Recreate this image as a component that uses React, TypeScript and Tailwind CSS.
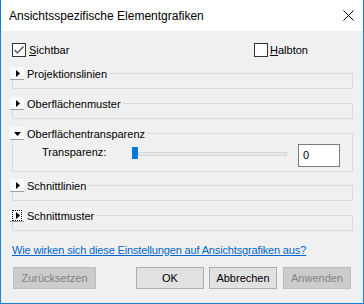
import React from "react"

const font = { fontFamily: '"Liberation Sans", Arial, sans-serif' }

function Arrow({ open }: { open?: boolean }) {
  return (
    <svg width="7" height="7" viewBox="0 0 7 7">
      {open ? <path d="M0 2 L7 2 L3.5 6 Z" fill="#000" /> : <path d="M2 0 L6 3.5 L2 7 Z" fill="#000" />}
    </svg>
  )
}

function Group({
  label,
  open,
  focused,
  children,
  className,
}: {
  label: string
  open?: boolean
  focused?: boolean
  children?: React.ReactNode
  className?: string
}) {
  return (
    <div className={className}>
      {/* header sits over the top line of the box */}
      <div className="relative z-10 flex h-[13px] items-center">
        <div className="flex h-[13px] w-[14px] items-center justify-center border-b border-[#a0a0a0] bg-[#fafafa]">
          <div className={focused ? "flex h-[11px] w-[10px] items-center justify-center border border-dotted border-black" : "flex"}>
            <Arrow open={open} />
          </div>
        </div>
        <span className="bg-[#f0f0f0] pl-[3px] pr-[2px] text-[11px] leading-[16px] text-black">{label}</span>
      </div>
      <div className="ml-[2px] mr-[10px] -mt-[7px] border border-[#dadada]">{children}</div>
    </div>
  )
}

export default function App() {
  return (
    <div style={font} className="flex h-[304px] w-[364px] flex-col border-x border-b border-[#1883d7] bg-[#f0f0f0] text-[11px] text-black">
      {/* Title bar */}
      <div className="flex h-[31px] items-center justify-between bg-white pl-[8px] pr-[8px]">
        <span className="text-[12px]">Ansichtsspezifische Elementgrafiken</span>
        <svg width="11" height="11" viewBox="0 0 11 11" className="mr-[1px]">
          <path d="M0.5 0.5 L10.5 10.5 M10.5 0.5 L0.5 10.5" stroke="#000" strokeWidth="1" />
        </svg>
      </div>

      <div className="flex flex-col pl-[9px]">
        {/* Checkboxes */}
        <div className="mt-[12px] flex h-[14px] items-center pl-[2px]">
          <div className="flex h-[14px] w-[14px] items-center justify-center border border-[#333] bg-white">
            <svg width="12" height="12" viewBox="0 0 12 12">
              <path d="M1.5 6 L4.5 9 L10.5 2.5" fill="none" stroke="#444" strokeWidth="1.2" />
            </svg>
          </div>
          <span className="ml-[3px] w-[225px] leading-[16px]">
            <span className="underline">S</span>ichtbar
          </span>
          <div className="flex h-[14px] w-[14px] border border-[#333] bg-white" />
          <span className="ml-[2px] leading-[16px]">
            <span className="underline">H</span>albton
          </span>
        </div>

        <Group label="Projektionslinien" className="mt-[10px]">
          <div className="h-[14px]" />
        </Group>
        <Group label="Oberflächenmuster" className="mt-[8px]">
          <div className="h-[14px]" />
        </Group>
        <Group label="Oberflächentransparenz" open className="mt-[8px]">
          <div className="flex h-[37px] items-start pl-[29px] pt-[10px]">
            <span className="w-[90px] leading-[16px]">Transparenz:</span>
            <div className="mt-[3px] h-[12px] w-[6px] bg-[#0078d7]" />
            <div className="mt-[8px] h-[4px] w-[149px] border border-[#d6d6d6] bg-[#e7e7e7]" />
            <div className="ml-[11px] flex h-[23px] w-[42px] items-center border border-[#7a7a7a] bg-white pl-[4px]">0</div>
          </div>
        </Group>
        <Group label="Schnittlinien" className="mt-[7px]">
          <div className="h-[14px]" />
        </Group>
        <Group label="Schnittmuster" focused className="mt-[8px]">
          <div className="h-[14px]" />
        </Group>

        <a className="ml-[2px] mt-[11px] self-start leading-[16px] tracking-[-0.15px] text-[#0066cc] underline">
          Wie wirken sich diese Einstellungen auf Ansichtsgrafiken aus?
        </a>

        <div className="mt-[9px] flex h-[22px] pl-[3px]">
          <div className="flex w-[83px] items-center justify-center border border-[#bfbfbf] bg-[#cccccc] text-[#838383]">
            Zurücksetzen
          </div>
          <div className="ml-[40px] flex w-[68px] items-center justify-center border border-[#adadad] bg-[#e1e1e1]">OK</div>
          <div className="ml-[5px] flex w-[68px] items-center justify-center border border-[#adadad] bg-[#e1e1e1]">Abbrechen</div>
          <div className="ml-[6px] flex w-[68px] items-center justify-center border border-[#bfbfbf] bg-[#cccccc] text-[#838383]">
            Anwenden
          </div>
        </div>
      </div>
    </div>
  )
}
